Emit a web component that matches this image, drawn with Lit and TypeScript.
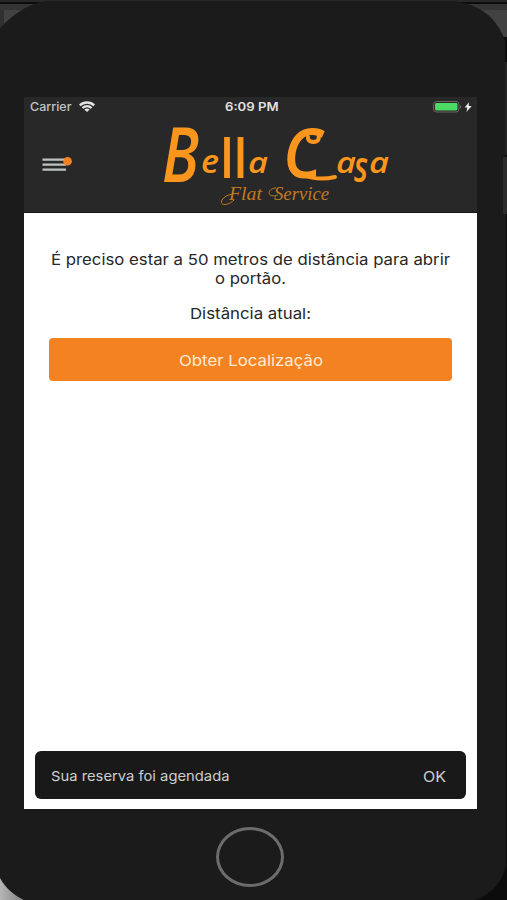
import { LitElement, html, css, svg } from "lit";
import { customElement, property } from "lit/decorators.js";

/* A single line of type stretched to an exact measure. */
@customElement("fit-text")
class FitText extends LitElement {
  @property() text = "";
  @property({ type: Number }) w = 100;
  @property({ type: Number }) h = 20;
  @property({ type: Number }) base = 15;
  @property({ type: Number }) size = 15;
  @property({ type: Number }) weight = 400;
  static styles = css`
    :host { display: block; flex: none; }
    svg { display: block; overflow: visible; }
    text { font-family: Inter, "Liberation Sans", sans-serif; fill: currentColor; }
  `;
  render() {
    return html`<svg width=${this.w} height=${this.h}>
      <text x="0" y=${this.base} font-size=${this.size} font-weight=${this.weight}
        textLength=${this.w} lengthAdjust="spacingAndGlyphs">${this.text}</text>
    </svg>`;
  }
}

@customElement("brand-logo")
class BrandLogo extends LitElement {
  static styles = css`
    :host { display: block; }
    svg { display: block; overflow: visible; }
    .name { font-family: "Open Sans", sans-serif; font-style: italic; font-weight: 600; fill: #fa961e; }
    .upright { font-style: normal; }
    .tag { font-family: "Liberation Serif", serif; font-style: italic; fill: #c47a22; }
  `;
  render() {
    const part = (t: string, x: number, y: number, size: number, w: number, cls = "") =>
      svg`<tspan class=${cls} x=${x} y=${y} font-size=${size} textLength=${w} lengthAdjust="spacingAndGlyphs">${t}</tspan>`;
    return html`<svg width="230" height="84" viewBox="162 122 230 84">
      <text class="name">${part("B", 162, 182, 76, 37)}${part("e", 201, 173, 32, 18)}${part("l", 220, 178, 55, 14, "upright")}${part("l", 233.5, 178, 55, 14, "upright")}${part("a", 248, 173, 29, 20)}</text>
      <text class="name">${part("C", 283, 178, 69, 39)}${part("a", 336, 173, 29, 20)}${part("s", 354, 182, 43, 14)}${part("a", 369, 173, 29, 20)}</text>
      <g fill="none" stroke="#fa961e" stroke-linecap="round">
        <path d="M317 131Q322 142 313 142Q307 141 308 137" stroke-width="4"/>
        <path d="M303 175Q318 181 335 177" stroke-width="4"/>
      </g>
      <text class="tag"><tspan x="229" y="200" font-size="19" textLength="33" lengthAdjust="spacingAndGlyphs">Flat</tspan> <tspan x="274" y="200" font-size="19" textLength="55" lengthAdjust="spacingAndGlyphs">Service</tspan></text>
      <path d="M234 200C228 206 219 206 222 200Q225 195 233 194M278 195C266 199 267 188 276 188" fill="none" stroke="#c47a22" stroke-width="1"/>
    </svg>`;
  }
}

@customElement("app-root")
class AppRoot extends LitElement {
  static styles = css`
    :host { display: block; width: 507px; height: 900px; overflow: hidden; position: relative; background: #0c0c0c; }
    * { box-sizing: border-box; }
    .backdrop { position: absolute; inset: 0; display: block; }
    .device { position: relative; height: 900px; padding: 97px 30px 0 24px; display: flex; flex-direction: column; }
    .screen { height: 712px; background: #fff; display: flex; flex-direction: column; }
    header { height: 116px; background: #282828; flex: none; border-bottom: 1px solid #141414; }
    .status { height: 20px; display: grid; grid-template-columns: 195px 1fr auto; align-items: start; padding: 0 3px 0 6px; }
    .carrier { display: flex; gap: 7px; color: #c4c4c4; }
    .wifi { margin-top: 4px; }
    .time { color: #e2e2e2; }
    .bar { display: flex; height: 88px; padding: 5px 0 0 18px; }
    .menu { margin-top: 34px; width: 32px; }
    .menu, .wifi, .battery { display: block; flex: none; }
    brand-logo { margin-left: 88px; }
    main { flex: 1; padding: 37px 25px 0; display: flex; flex-direction: column; align-items: center; color: #272727; }
    .gap { margin-top: 14px; }
    button { margin-top: 14px; width: 403px; height: 43px; border: 0; border-radius: 4px; background: #f58220; color: #ffead5;
      padding: 0; display: flex; align-items: center; justify-content: center; }
    .toast { margin: 0 11px 10px; height: 48px; border-radius: 6px; background: #191919; display: flex; justify-content: space-between;
      align-items: center; padding: 0 20px 0 16px; color: #cecece; flex: none; }
    .home { width: 68px; height: 60px; border: 3px solid #6c6c6c; border-radius: 50%; margin: 18px 0 0 192px; }
  `;
  render() {
    return html`
      <svg class="backdrop" width="507" height="900">
        <defs>
          <linearGradient id="corner" x1="0" x2="1" y1="0" y2="0">
            <stop offset="0" stop-color="#b5b5b5"/><stop offset="1" stop-color="#626262"/>
          </linearGradient>
        </defs>
        <rect width="507" height="900" fill="#0c0c0c"/>
        <rect width="507" height="2" fill="#282828"/>
        <rect y="4" width="507" height="6" fill="#353535"/>
        <rect y="10" width="507" height="27" fill="#424242"/>
        <rect y="10" width="4" height="20" fill="#303030"/>
        <rect x="505" y="62" width="2" height="93" fill="#242424"/>
        <rect x="503" y="157" width="4" height="57" fill="#2b2b2b"/>
        <rect y="870" width="40" height="30" fill="url(#corner)"/>
        <path d="M0 28C13 15 25 5 46 1H454C482 5 496 18 505 40V157H503V214H506V866C502 883 491 895 472 901H26C15 896 6 889 0 878Z" fill="#1b1b1b"/>
      </svg>
      <div class="device">
        <div class="screen">
          <header>
            <div class="status">
              <div class="carrier">
                <fit-text text="Carrier" .w=${41.5} .h=${18} .base=${14.3} .size=${11.8} .weight=${500}></fit-text>
                <svg class="wifi" width="16" height="12" viewBox="0 0 16 12" fill="none" stroke="#e4e4e4" stroke-width="2.3">
                  <path d="M.8 4.4C4.7.5 11.3.5 15.2 4.4M3.4 7C6.1 4.6 9.9 4.6 12.6 7"/>
                  <path d="M5.3 8.6Q8 6.4 10.7 8.6L8 11Z" fill="#e4e4e4" stroke="none"/>
                </svg>
              </div>
              <fit-text class="time" text="6:09 PM" .w=${53.5} .h=${18} .base=${14.3} .size=${11.8} .weight=${600}></fit-text>
              <svg class="battery" width="41" height="19" viewBox="433 97 41 19">
                <rect x="433.5" y="101.5" width="25.5" height="10.5" rx="3" fill="#282828" stroke="#666" />
                <rect x="435" y="103" width="22.5" height="7.5" rx="1.4" fill="#4cd964"/>
                <path d="M460.2 105V108.8Q462.4 107 460.2 105Z" fill="#777"/>
                <path d="M469 102.2L464.7 107.4H467.4L466.4 112L471.7 105.9H468.7Z" fill="#f0f0f0"/>
              </svg>
            </div>
            <div class="bar">
              <svg class="menu" width="32" height="18" viewBox="42 156 32 18">
                <path d="M42.5 159.6H65M42.5 164.6H66M42.5 169.6H66" stroke="#bdc3c2" stroke-width="2.3"/>
                <circle cx="67.6" cy="161.2" r="4.3" fill="#f58220"/>
              </svg>
              <brand-logo></brand-logo>
            </div>
          </header>
          <main>
            <fit-text text="É preciso estar a 50 metros de distância para abrir" .w=${399} .h=${19} .base=${15} .size=${15}></fit-text>
            <fit-text text="o portão." .w=${71} .h=${19} .base=${15} .size=${15}></fit-text>
            <fit-text class="gap" text="Distância atual:" .w=${121} .h=${22} .base=${16.7} .size=${15}></fit-text>
            <button><fit-text text="Obter Localização" .w=${144} .h=${20} .base=${15.5} .size=${15}></fit-text></button>
          </main>
          <div class="toast">
            <fit-text text="Sua reserva foi agendada" .w=${178.5} .h=${20} .base=${15.5} .size=${13.7}></fit-text>
            <fit-text text="OK" .w=${23} .h=${20} .base=${16.6} .size=${14.3}></fit-text>
          </div>
        </div>
        <div class="home"></div>
      </div>`;
  }
}
